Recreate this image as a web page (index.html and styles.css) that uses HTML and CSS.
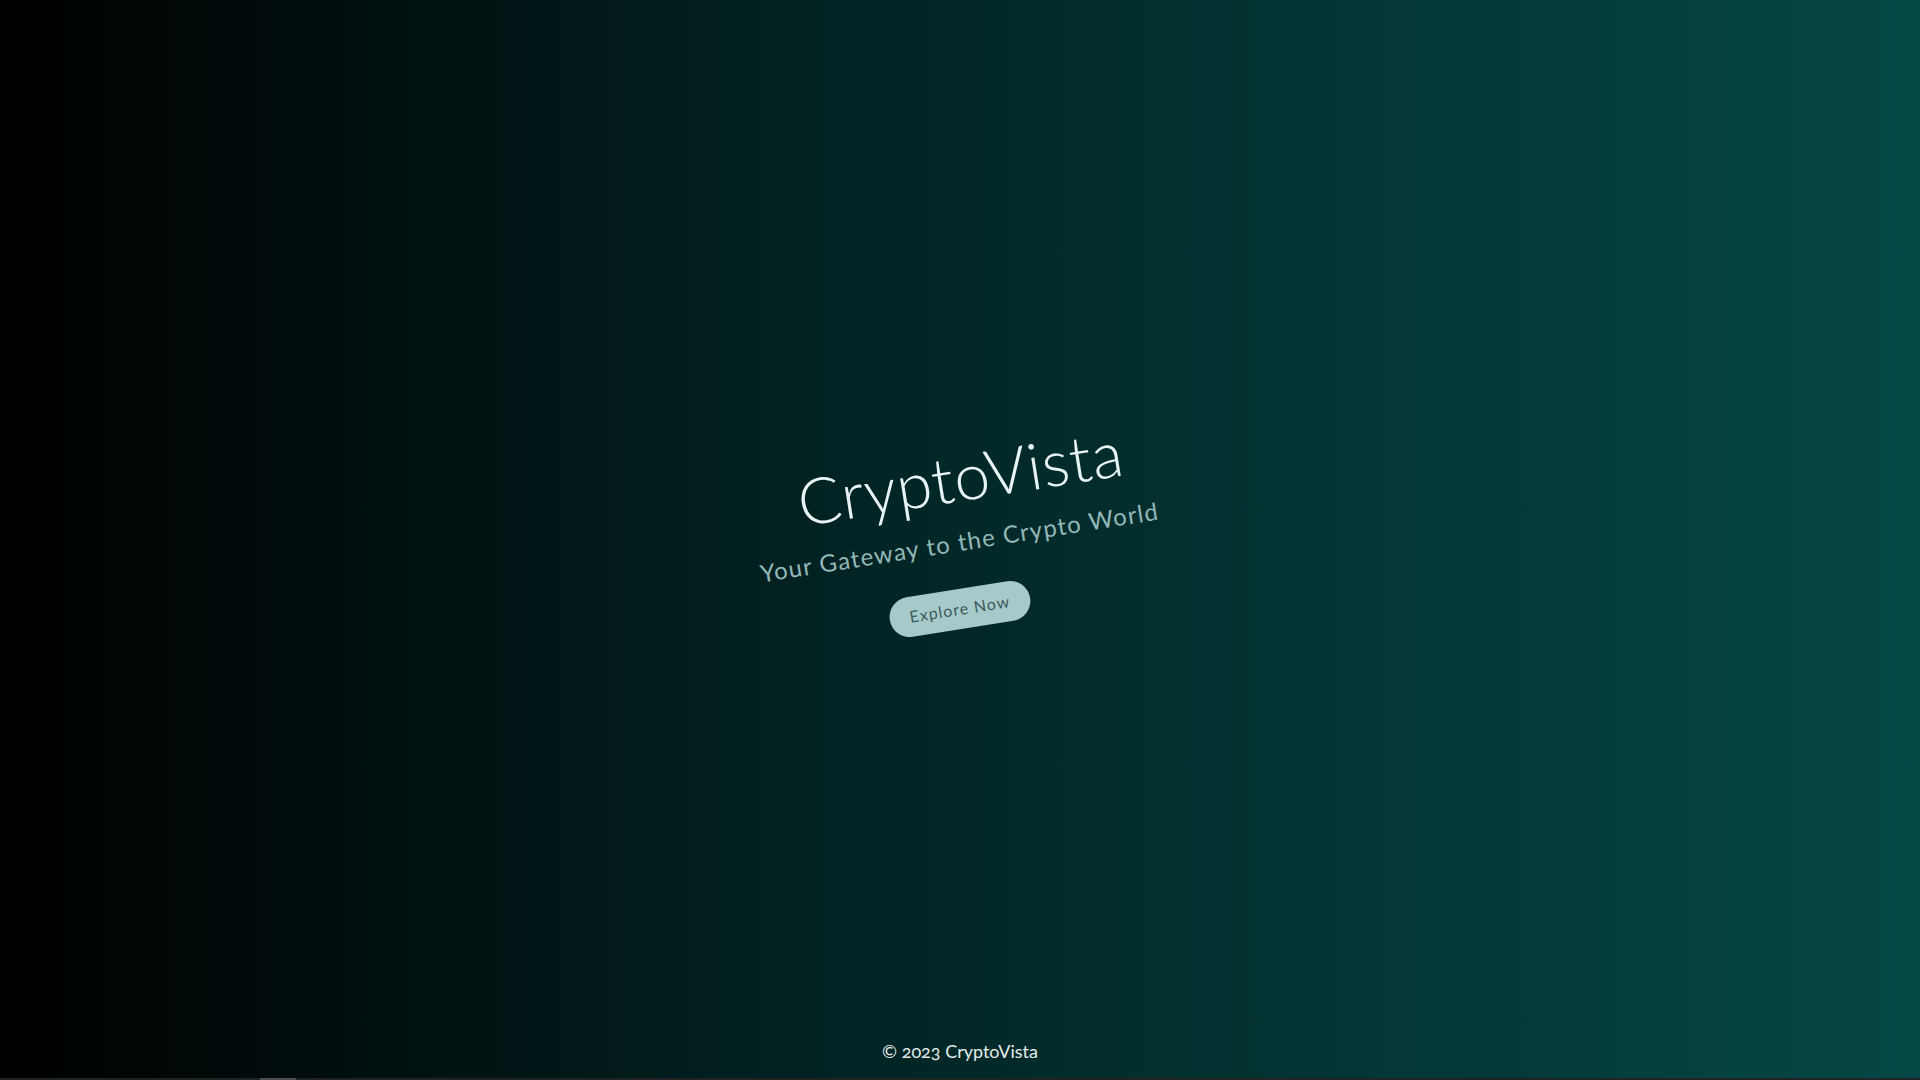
FILE: index.html
```html
<!DOCTYPE html>
<html lang="en">
<head>
<meta charset="utf-8">
<title>CryptoVista</title>
<link rel="stylesheet" href="styles.css">
</head>
<body>
<div class="page">
  <main class="main">
    <section class="hero">
      <h1 class="title tilt">CryptoVista</h1>
      <p class="subtitle tilt">Your Gateway to the Crypto World</p>
      <a class="cta tilt" href="#">Explore Now</a>
    </section>
  </main>
  <footer class="footer">© 2023 CryptoVista</footer>
</div>
<div class="scrollstrip"><div class="thumb"></div></div>
</body>
</html>
```
FILE: styles.css
```css
html, body {
  margin: 0;
  padding: 0;
  background: #1f2322;
}
body {
  font-family: "Lato", "Open Sans", sans-serif;
  overflow: hidden;
}
.page {
  height: 1078px;
  display: flex;
  flex-direction: column;
  background: linear-gradient(to right, #000000 0%, #022828 50%, #054846 100%);
}
.main {
  flex: 1;
  display: flex;
  align-items: center;
  justify-content: center;
  padding-top: 44px;
}
.hero {
  display: flex;
  flex-direction: column;
  align-items: center;
}
.tilt {
  transform: rotate(-9deg);
}
.title {
  margin: 0;
  font-size: 64px;
  font-weight: 300;
  letter-spacing: 0.6px;
  color: #e8f3f3;
  line-height: 1.2;
}
.subtitle {
  margin: 12px 0 0;
  font-size: 24px;
  font-weight: 400;
  letter-spacing: 1.2px;
  color: #93b8b8;
  line-height: 1.2;
}
.cta {
  margin-top: 32px;
  display: inline-block;
  padding: 11px 20px;
  border-radius: 22px;
  background: #a6caca;
  color: #3c5a5a;
  font-size: 16px;
  line-height: 1.15;
  letter-spacing: 1px;
  text-decoration: none;
}
.footer {
  text-align: center;
  padding: 17px 0 16px;
  color: #e2ecec;
  font-size: 18px;
  line-height: 1.15;
  font-variant-numeric: oldstyle-nums;
}
.scrollstrip {
  height: 2px;
  background: #1f2322;
}
.thumb {
  margin-left: 260px;
  width: 36px;
  height: 2px;
  background: #4b4e4d;
}
```
